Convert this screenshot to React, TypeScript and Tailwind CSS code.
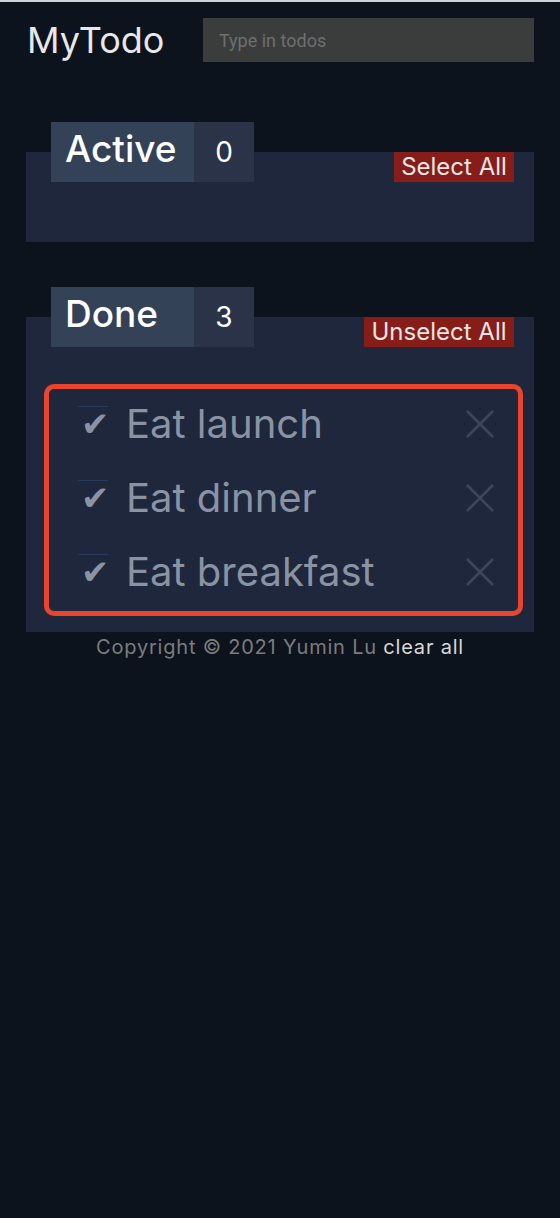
import React from "react";

const todos = ["Eat launch", "Eat dinner", "Eat breakfast"];

const Tab = ({ label, count }: { label: string; count: number }) => (
  <div className="-mt-[30px] ml-[25px] flex h-[60px] font-['Inter',sans-serif] text-white">
    <div className="flex w-[143px] items-center bg-[#334256] pb-[6px] pl-[14px] text-[37px] font-medium">
      {label}
    </div>
    <div className="flex w-[60px] items-center justify-center bg-[#2a3347] text-[28px]">
      {count}
    </div>
  </div>
);

const ActionBtn = ({ text, w }: { text: string; w: string }) => (
  <button
    className={`mr-[20px] h-[30px] bg-[#861d19] text-center font-['Inter',sans-serif] text-[24px] leading-[30px] text-[#e6e6e6] ${w}`}
  >
    {text}
  </button>
);

export default function App() {
  return (
    <div className="min-h-screen bg-[#0d131d]">
      <div className="h-[2px] bg-[#cfd2d6]" />
      <div className="px-[26px]">
        {/* header */}
        <div className="flex h-[44px] items-center mt-[16px]">
          <h1 className="w-[177px] pl-[1px] font-['Inter',sans-serif] text-[36px] font-normal leading-[44px] text-[#e8e8e8]">
            MyTodo
          </h1>
          <input
            type="text"
            placeholder="Type in todos"
            className="h-[44px] flex-1 bg-[#3a3d3c] px-[16px] font-['Roboto',sans-serif] text-[18px] text-white outline-none placeholder:text-[#6d706f]"
          />
        </div>

        {/* active */}
        <div className="mt-[90px] h-[90px] bg-[#1e273b]">
          <div className="flex items-start justify-between">
            <Tab label="Active" count={0} />
            <ActionBtn text="Select All" w="w-[120px]" />
          </div>
        </div>

        {/* done */}
        <div className="mt-[75px] bg-[#1e273b] pb-[16px]">
          <div className="flex items-start justify-between">
            <Tab label="Done" count={3} />
            <ActionBtn text="Unselect All" w="w-[150px]" />
          </div>
          <div className="ml-[18px] mr-[11px] mt-[37px] rounded-[10px] border-[5px] border-[#e8442e]">
            {todos.map((t) => (
              <div key={t} className="flex h-[74px] items-center pb-[5px] pl-[29px] pr-[23px]">
                <div className="flex w-[48px] flex-col">
                  <div className="h-px w-[30px] bg-[#2a3a5e]" />
                  <span className="ml-[3px] font-['DejaVu_Sans',sans-serif] text-[34px] leading-[34px] text-[#8a93a3]">
                    ✔
                  </span>
                </div>
                <span className="flex-1 font-['Inter',sans-serif] text-[40px] text-[#8a93a3]">
                  {t}
                </span>
                <svg width="30" height="30" viewBox="0 0 30 30">
                  <path d="M2 2 L28 28 M28 2 L2 28" stroke="#3c4759" strokeWidth="2.6" />
                </svg>
              </div>
            ))}
          </div>
        </div>

        {/* footer */}
        <p className="text-center font-['Inter',sans-serif] text-[20px] leading-[30px] tracking-[0.8px] text-[#7b7c7e]">
          Copyright © 2021 Yumin Lu <span className="text-[#d8d8d8]">clear all</span>
        </p>
      </div>
    </div>
  );
}
